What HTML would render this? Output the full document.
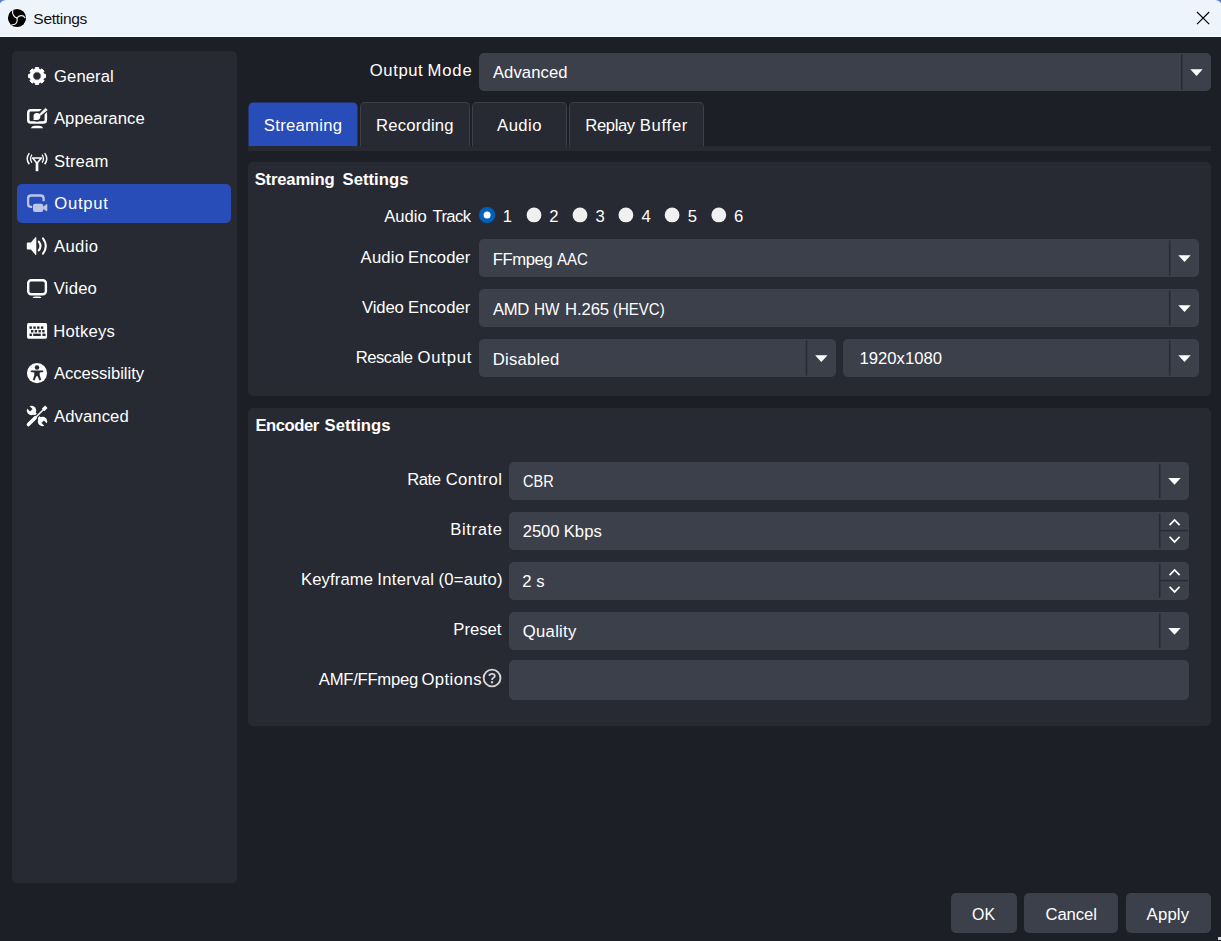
<!DOCTYPE html>
<html><head><meta charset="utf-8"><title>Settings</title>
<style>
html,body{margin:0;padding:0;}
body{width:1221px;height:941px;overflow:hidden;background:#1d1f26;position:relative;font-family:"Liberation Sans",sans-serif;}
.b{position:absolute;}
.t{position:absolute;white-space:nowrap;line-height:20px;color:#fff;font-family:"Liberation Sans",sans-serif;}
.ov{position:absolute;left:0;top:0;}
</style></head><body>
<div class="b" style="left:0px;top:0px;width:1221px;height:36px;background:#eef4fb;"></div>
<div class="b" style="left:0px;top:36px;width:1221px;height:1px;background:#fdfeff;"></div>
<div class="b" style="left:12px;top:51px;width:225.4px;height:832px;background:#272a33;border-radius:5px;"></div>
<div class="b" style="left:17px;top:184px;width:214px;height:38.5px;background:#284cb8;border-radius:5px;"></div>
<div class="b" style="left:479px;top:53px;width:732px;height:38px;background:#3c404b;border-radius:5px;"></div>
<div class="b" style="left:360px;top:102px;width:110px;height:44px;background:#272a33;border-radius:5px 5px 0 0;box-sizing:border-box;border:1px solid #3c404b;border-bottom:none;"></div>
<div class="b" style="left:472px;top:102px;width:95px;height:44px;background:#272a33;border-radius:5px 5px 0 0;box-sizing:border-box;border:1px solid #3c404b;border-bottom:none;"></div>
<div class="b" style="left:569px;top:102px;width:135px;height:44px;background:#272a33;border-radius:5px 5px 0 0;box-sizing:border-box;border:1px solid #3c404b;border-bottom:none;"></div>
<div class="b" style="left:248px;top:146px;width:963px;height:5px;background:#272a33;"></div>
<div class="b" style="left:248px;top:162px;width:963px;height:234px;background:#272a33;border-radius:5px;"></div>
<div class="b" style="left:248px;top:408px;width:963px;height:318px;background:#272a33;border-radius:5px;"></div>
<div class="b" style="left:479px;top:239px;width:720px;height:38px;background:#3c404b;border-radius:5px;"></div>
<div class="b" style="left:479px;top:289px;width:720px;height:38px;background:#3c404b;border-radius:5px;"></div>
<div class="b" style="left:479px;top:339px;width:357px;height:38px;background:#3c404b;border-radius:5px;"></div>
<div class="b" style="left:843px;top:339px;width:356px;height:38px;background:#3c404b;border-radius:5px;"></div>
<div class="b" style="left:509px;top:462px;width:680px;height:37.5px;background:#3c404b;border-radius:5px;"></div>
<div class="b" style="left:509px;top:512px;width:680px;height:37.5px;background:#3c404b;border-radius:5px;"></div>
<div class="b" style="left:509px;top:562px;width:680px;height:37.5px;background:#3c404b;border-radius:5px;"></div>
<div class="b" style="left:509px;top:612px;width:680px;height:37.5px;background:#3c404b;border-radius:5px;"></div>
<div class="b" style="left:509px;top:660px;width:680px;height:40px;background:#3c404b;border-radius:5px;"></div>
<div class="b" style="left:951px;top:893px;width:66px;height:40px;background:#3c404b;border-radius:5px;"></div>
<div class="b" style="left:1024px;top:893px;width:94px;height:40px;background:#3c404b;border-radius:5px;"></div>
<div class="b" style="left:1126px;top:893px;width:84.5px;height:40px;background:#3c404b;border-radius:5px;"></div>
<div class="b" style="left:1218px;top:937px;width:3px;height:3px;background:#d4d4d4;"></div>
<svg class="ov" width="1221" height="941" viewBox="0 0 1221 941">
<path d="M0,0 L5.6,0 Q1.3,0.6 0,3.6Z" fill="#5a80c8"/>
<path d="M1221,0 L1215.6,0 Q1219.7,0.6 1221,3.4Z" fill="#5a80c8"/>
<path d="M248.5,146 L248.5,107.5 Q248.5,102.5 253.5,102.5 L352.5,102.5 Q357.5,102.5 357.5,107.5 L357.5,146Z" fill="#284cb8"/>
<circle cx="17" cy="18" r="9.7" fill="#fff"/>
<circle cx="17" cy="18" r="9.1" fill="#000"/>
<g fill="none" stroke="#ececec" stroke-width="1.2" stroke-linecap="round"><path d="M16.9,18 C14.5,17.2 11.6,14.2 12.8,10.2"/><path d="M16.9,18 C18.8,15.6 22.9,14.2 25.0,17.8"/><path d="M16.9,18 C18.3,21.2 16.2,25.2 12.0,24.7"/></g>
<path d="M1197,12 L1209.2,24.2 M1209.2,12 L1197,24.2" stroke="#000" stroke-width="1.15" fill="none"/>
<path d="M35.03,69.28 L35.41,67.50 L38.59,67.50 L38.97,69.28 L40.36,69.86 L41.89,68.86 L44.14,71.11 L43.14,72.64 L43.72,74.03 L45.50,74.41 L45.50,77.59 L43.72,77.97 L43.14,79.36 L44.14,80.89 L41.89,83.14 L40.36,82.14 L38.97,82.72 L38.59,84.50 L35.41,84.50 L35.03,82.72 L33.64,82.14 L32.11,83.14 L29.86,80.89 L30.86,79.36 L30.28,77.97 L28.50,77.59 L28.50,74.41 L30.28,74.03 L30.86,72.64 L29.86,71.11 L32.11,68.86 L33.64,69.86Z M32.80,76.00 a4.2,4.2 0 1,0 8.4,0 a4.2,4.2 0 1,0 -8.4,0Z" fill="#fff" fill-rule="evenodd" stroke="#fff" stroke-width="0.9" stroke-linejoin="round"/>
<g><rect x="28.25" y="110.3" width="17.6" height="12.3" rx="2.6" fill="none" stroke="#fff" stroke-width="2.5"/><path d="M47.8,107.4 L38.5,116" stroke="#272a33" stroke-width="5.6" fill="none" stroke-linecap="butt"/><circle cx="37.0" cy="116.7" r="5.0" fill="#272a33"/><path d="M45.5,108.2 L47.4,110.0 L40.6,115.4 L39.4,114.2Z" fill="#fff" stroke="#fff" stroke-width="0.5" stroke-linejoin="round"/><circle cx="36.9" cy="116.4" r="3.4" fill="#fff"/><path d="M33.4,120.0 C33.7,118.4 33.8,117.2 34.3,115.4 L38.6,119.2 C36.8,120.1 35.2,120.1 33.4,120.0Z" fill="#fff"/><path d="M30.8,128.2 Q31.5,125.7 34.5,125.7 L39.5,125.7 Q42.5,125.7 43.2,128.2Z" fill="#fff"/></g>
<g fill="none" stroke="#fff"><path d="M32.6,158.0 L41.4,158.0 L37,163.3Z" fill="none" stroke-width="1.6" stroke-linejoin="round"/><path d="M37,162.5 L37,171.2" stroke-width="2.7"/><path d="M31.9,154.7 Q29.2,158.7 31.9,162.7" stroke-width="1.3"/><path d="M29.3,153.1 Q25.2,158.7 29.3,164.3" stroke-width="1.5"/><path d="M42.1,154.7 Q44.8,158.7 42.1,162.7" stroke-width="1.3"/><path d="M44.7,153.1 Q48.8,158.7 44.7,164.3" stroke-width="1.5"/></g>
<g fill="none" stroke="#bcc6ea"><path d="M32.2,206.9 L31,206.9 Q28.1,206.9 28.1,204 L28.1,198.4 Q28.1,195.5 31,195.5 L40.7,195.5 Q43.6,195.5 43.6,198.4 L43.6,201.2" stroke-width="2.3"/><rect x="33" y="203.7" width="10.2" height="8.3" rx="2" fill="#bcc6ea" stroke="none"/><path d="M43.3,206.7 L47.0,204.3 L47.0,211.1 L43.3,208.9Z" fill="#bcc6ea" stroke="#bcc6ea" stroke-width="0.6" stroke-linejoin="round"/></g>
<g><path d="M26.8,243.6 Q26.8,242.5 27.9,242.5 L30.9,242.5 L35.4,237.3 Q36.3,236.6 36.3,237.8 L36.3,254.2 Q36.3,255.4 35.4,254.7 L30.9,249.6 L27.9,249.6 Q26.8,249.6 26.8,248.5Z" fill="#fff"/><path d="M38.8,241.6 Q42.2,246 38.8,250.4" fill="none" stroke="#fff" stroke-width="2.1" stroke-linecap="round"/><path d="M43.0,238.3 Q48.6,246 43.0,253.7" fill="none" stroke="#fff" stroke-width="2.1" stroke-linecap="round"/></g>
<g><rect x="28.2" y="280.2" width="17.7" height="14.0" rx="3" fill="none" stroke="#fff" stroke-width="2.4"/><path d="M32.8,297.6 Q33.4,296.4 35,296.4 L39,296.4 Q40.6,296.4 41.2,297.6 L41.2,298.1 L32.8,298.1Z" fill="#fff"/></g>
<rect x="27" y="323.1" width="20.1" height="15.6" rx="1.6" fill="#fff"/><g fill="#272a33"><rect x="29.5" y="326.4" width="2.4" height="2.4"/><rect x="33.3" y="326.4" width="2.4" height="2.4"/><rect x="37.1" y="326.4" width="2.4" height="2.4"/><rect x="40.9" y="326.4" width="2.4" height="2.4"/><rect x="31.0" y="330.0" width="2.4" height="2.4"/><rect x="34.699999999999996" y="330.0" width="2.4" height="2.4"/><rect x="38.5" y="330.0" width="2.4" height="2.4"/><rect x="42.199999999999996" y="330.0" width="2.4" height="2.4"/><rect x="29.5" y="333.6" width="2.4" height="2.4"/><rect x="33.2" y="333.6" width="7.6" height="2.4"/><rect x="42.4" y="333.6" width="3.1" height="2.4"/></g>
<circle cx="37" cy="373.1" r="10.1" fill="#fff"/><g fill="#272a33"><circle cx="37" cy="367.6" r="2.25"/><path d="M30.8,370.5 L43.2,370.5 L43.2,372.0 L39.7,372.5 L39.7,375.2 L41.2,379.8 L39.5,380.4 L37.7,376.2 L36.3,376.2 L34.5,380.4 L32.8,379.8 L34.3,375.2 L34.3,372.5 L30.8,372.0Z"/></g>
<g><path d="M31.6,410.6 L42.4,421.4" stroke="#fff" stroke-width="3.3" fill="none"/><circle cx="31.5" cy="410.5" r="4.7" fill="#fff"/><circle cx="42.5" cy="421.5" r="4.7" fill="#fff"/><path d="M31.3,410.3 L25.5,404.5" stroke="#272a33" stroke-width="3.5" fill="none"/><path d="M42.7,421.7 L48.5,427.5" stroke="#272a33" stroke-width="3.5" fill="none"/><path d="M28.0,425.0 L35.4,417.6" stroke="#272a33" stroke-width="5.4" stroke-linecap="round" fill="none"/><path d="M35,418 L46.6,406.4" stroke="#272a33" stroke-width="3.6" fill="none"/><path d="M28.4,424.6 L35.3,417.7" stroke="#fff" stroke-width="3.5" stroke-linecap="round" fill="none"/><path d="M35,418 L43.8,409.2" stroke="#fff" stroke-width="1.5" fill="none"/><path d="M43.0,410.0 L46.3,406.7" stroke="#fff" stroke-width="3.5" fill="none"/></g>
<circle cx="487.1" cy="215" r="8.1" fill="#0060bf"/><circle cx="487.1" cy="215" r="3.5" fill="#fff"/>
<circle cx="534.0" cy="214.9" r="7.4" fill="#f0f0f0"/>
<circle cx="580.0" cy="214.9" r="7.4" fill="#f0f0f0"/>
<circle cx="625.9" cy="214.9" r="7.4" fill="#f0f0f0"/>
<circle cx="672.1" cy="214.9" r="7.4" fill="#f0f0f0"/>
<circle cx="718.8" cy="214.9" r="7.4" fill="#f0f0f0"/>
<rect x="1180.9" y="54.5" width="1.6" height="35" fill="#282b35"/><path d="M1190.3,69.3 L1202.7,69.3 L1196.5,76.1Z" fill="#fff"/>
<rect x="1168.9" y="240.5" width="1.6" height="35" fill="#282b35"/><path d="M1178.3,255.3 L1190.7,255.3 L1184.5,262.1Z" fill="#fff"/>
<rect x="1168.9" y="290.5" width="1.6" height="35" fill="#282b35"/><path d="M1178.3,305.3 L1190.7,305.3 L1184.5,312.1Z" fill="#fff"/>
<rect x="805.6999999999999" y="340.5" width="1.6" height="35" fill="#282b35"/><path d="M815.0999999999999,355.3 L827.5,355.3 L821.3,362.1Z" fill="#fff"/>
<rect x="1168.9" y="340.5" width="1.6" height="35" fill="#282b35"/><path d="M1178.3,355.3 L1190.7,355.3 L1184.5,362.1Z" fill="#fff"/>
<rect x="1158.9" y="463.5" width="1.6" height="34.5" fill="#282b35"/><path d="M1168.3,478.05 L1180.7,478.05 L1174.5,484.85Z" fill="#fff"/>
<rect x="1158.9" y="513.5" width="1.6" height="34.5" fill="#282b35"/><rect x="1160.2" y="529.85" width="27.6" height="1.5" fill="#282b35"/><path d="M1169.6,525.15 L1174.6,519.95 L1179.6,525.15" fill="none" stroke="#fff" stroke-width="1.7"/><path d="M1169.6,536.75 L1174.6,541.95 L1179.6,536.75" fill="none" stroke="#fff" stroke-width="1.7"/>
<rect x="1158.9" y="563.5" width="1.6" height="34.5" fill="#282b35"/><rect x="1160.2" y="579.85" width="27.6" height="1.5" fill="#282b35"/><path d="M1169.6,575.15 L1174.6,569.95 L1179.6,575.15" fill="none" stroke="#fff" stroke-width="1.7"/><path d="M1169.6,586.75 L1174.6,591.95 L1179.6,586.75" fill="none" stroke="#fff" stroke-width="1.7"/>
<rect x="1158.9" y="613.5" width="1.6" height="34.5" fill="#282b35"/><path d="M1168.3,628.05 L1180.7,628.05 L1174.5,634.8499999999999Z" fill="#fff"/>
<circle cx="492.05" cy="678" r="8.4" fill="none" stroke="#d6d6d6" stroke-width="1.9"/><path d="M489.3,675.9 Q489.4,673.9 492.0,673.9 Q494.8,673.9 494.8,676.0 Q494.8,677.2 493.2,678.0 Q492.0,678.7 492.0,680.0" fill="none" stroke="#d6d6d6" stroke-width="1.8"/><rect x="490.9" y="681.2" width="2.2" height="2.1" fill="#d6d6d6"/>
</svg>
<span class="t" id="title" style="left:33.36px;top:9.30px;font-size:15.5px;letter-spacing:-0.294px;color:#111;">Settings</span>
<span class="t" id="s0" style="left:54.10px;top:66.50px;font-size:16.67px;letter-spacing:0.065px;">General</span>
<span class="t" id="s1" style="left:53.90px;top:109.00px;font-size:16.67px;letter-spacing:0.116px;">Appearance</span>
<span class="t" id="s2" style="left:53.91px;top:151.50px;font-size:16.67px;letter-spacing:0.138px;">Stream</span>
<span class="t" id="s3" style="left:54.18px;top:194.00px;font-size:16.67px;letter-spacing:0.751px;">Output</span>
<span class="t" id="s4" style="left:53.97px;top:236.50px;font-size:16.67px;letter-spacing:0.379px;">Audio</span>
<span class="t" id="s5" style="left:53.72px;top:279.00px;font-size:16.67px;letter-spacing:0.215px;">Video</span>
<span class="t" id="s6" style="left:53.35px;top:321.50px;font-size:16.67px;letter-spacing:0.211px;">Hotkeys</span>
<span class="t" id="s7" style="left:54.04px;top:364.00px;font-size:16.67px;letter-spacing:-0.059px;">Accessibility</span>
<span class="t" id="s8" style="left:54.04px;top:406.50px;font-size:16.67px;letter-spacing:0.077px;">Advanced</span>
<span class="t" id="om_0" style="left:369.81px;top:61.00px;font-size:16.67px;letter-spacing:0.583px;">Output</span>
<span class="t" id="om_1" style="left:427.45px;top:61.00px;font-size:16.67px;letter-spacing:0.897px;">Mode</span>
<span class="t" id="omv" style="left:492.90px;top:62.50px;font-size:16.67px;letter-spacing:0.072px;">Advanced</span>
<span class="t" id="tab0" style="left:263.86px;top:115.50px;font-size:16.67px;letter-spacing:0.274px;">Streaming</span>
<span class="t" id="tab1" style="left:376.12px;top:115.50px;font-size:16.67px;letter-spacing:0.183px;">Recording</span>
<span class="t" id="tab2" style="left:497.12px;top:115.50px;font-size:16.67px;letter-spacing:0.438px;">Audio</span>
<span class="t" id="tab3_0" style="left:585.35px;top:115.50px;font-size:16.67px;letter-spacing:-0.417px;">Replay</span>
<span class="t" id="tab3_1" style="left:639.78px;top:115.50px;font-size:16.67px;letter-spacing:0.700px;">Buffer</span>
<span class="t" id="g1_0" style="left:254.65px;top:169.50px;font-size:16.67px;letter-spacing:-0.182px;font-weight:700;">Streaming</span>
<span class="t" id="g1_1" style="left:342.55px;top:169.50px;font-size:16.67px;letter-spacing:0.024px;font-weight:700;">Settings</span>
<span class="t" id="at_0" style="left:384.19px;top:206.50px;font-size:16.67px;letter-spacing:0.009px;">Audio</span>
<span class="t" id="at_1" style="left:432.53px;top:206.50px;font-size:16.67px;letter-spacing:-0.624px;">Track</span>
<span class="t" id="r1" style="left:502.78px;top:206.50px;font-size:16.67px;">1</span>
<span class="t" id="r2" style="left:549.30px;top:206.50px;font-size:16.67px;">2</span>
<span class="t" id="r3" style="left:595.41px;top:206.50px;font-size:16.67px;">3</span>
<span class="t" id="r4" style="left:641.38px;top:206.50px;font-size:16.67px;">4</span>
<span class="t" id="r5" style="left:687.82px;top:206.50px;font-size:16.67px;">5</span>
<span class="t" id="r6" style="left:734.03px;top:206.50px;font-size:16.67px;">6</span>
<span class="t" id="ae_0" style="left:360.60px;top:247.50px;font-size:16.67px;letter-spacing:0.184px;">Audio</span>
<span class="t" id="ae_1" style="left:408.00px;top:247.50px;font-size:16.67px;letter-spacing:0.056px;">Encoder</span>
<span class="t" id="ve_0" style="left:361.94px;top:297.50px;font-size:16.67px;letter-spacing:-0.088px;">Video</span>
<span class="t" id="ve_1" style="left:408.00px;top:297.50px;font-size:16.67px;letter-spacing:0.056px;">Encoder</span>
<span class="t" id="ro_0" style="left:355.67px;top:347.50px;font-size:16.67px;letter-spacing:-0.471px;">Rescale</span>
<span class="t" id="ro_1" style="left:417.60px;top:347.50px;font-size:16.67px;letter-spacing:0.769px;">Output</span>
<span class="t" id="aev_0" style="left:492.64px;top:249.50px;font-size:16.67px;letter-spacing:-0.389px;">FFmpeg</span>
<span class="t" id="aev_1" style="left:557.00px;top:249.50px;font-size:16.67px;transform:scaleX(0.9057);transform-origin:0 0;">AAC</span>
<span class="t" id="vev_0" style="left:492.90px;top:299.50px;font-size:16.67px;letter-spacing:-0.270px;">AMD</span>
<span class="t" id="vev_1" style="left:533.58px;top:299.50px;font-size:16.67px;transform:scaleX(0.9221);transform-origin:0 0;">HW</span>
<span class="t" id="vev_2" style="left:565.12px;top:299.50px;font-size:16.67px;letter-spacing:-0.114px;">H.265</span>
<span class="t" id="vev_3" style="left:612.65px;top:299.50px;font-size:16.67px;transform:scaleX(0.9008);transform-origin:0 0;">(HEVC)</span>
<span class="t" id="rov" style="left:492.79px;top:349.50px;font-size:16.67px;letter-spacing:0.223px;">Disabled</span>
<span class="t" id="res" style="left:859.54px;top:348.50px;font-size:16.67px;letter-spacing:0.005px;">1920x1080</span>
<span class="t" id="g2_0" style="left:255.38px;top:415.50px;font-size:16.67px;letter-spacing:-0.449px;font-weight:700;">Encoder</span>
<span class="t" id="g2_1" style="left:324.49px;top:415.50px;font-size:16.67px;letter-spacing:0.045px;font-weight:700;">Settings</span>
<span class="t" id="rc_0" style="left:407.21px;top:469.50px;font-size:16.67px;letter-spacing:-0.465px;">Rate</span>
<span class="t" id="rc_1" style="left:445.66px;top:469.50px;font-size:16.67px;letter-spacing:0.413px;">Control</span>
<span class="t" id="br" style="left:450.35px;top:519.50px;font-size:16.67px;letter-spacing:0.590px;">Bitrate</span>
<span class="t" id="ki_0" style="left:301.00px;top:569.50px;font-size:16.67px;letter-spacing:0.122px;">Keyframe</span>
<span class="t" id="ki_1" style="left:377.26px;top:569.50px;font-size:16.67px;letter-spacing:0.310px;">Interval</span>
<span class="t" id="ki_2" style="left:438.53px;top:569.50px;font-size:16.67px;letter-spacing:0.207px;">(0=auto)</span>
<span class="t" id="pr" style="left:453.27px;top:619.50px;font-size:16.67px;letter-spacing:0.005px;">Preset</span>
<span class="t" id="amf_0" style="left:318.87px;top:669.50px;font-size:16.67px;letter-spacing:-0.275px;">AMF/FFmpeg</span>
<span class="t" id="amf_1" style="left:421.39px;top:669.50px;font-size:16.67px;letter-spacing:0.446px;">Options</span>
<span class="t" id="rcv" style="left:522.59px;top:471.50px;font-size:16.67px;transform:scaleX(0.8740);transform-origin:0 0;">CBR</span>
<span class="t" id="brv_0" style="left:522.71px;top:521.50px;font-size:16.67px;letter-spacing:-0.061px;">2500</span>
<span class="t" id="brv_1" style="left:563.69px;top:521.50px;font-size:16.67px;letter-spacing:0.063px;">Kbps</span>
<span class="t" id="kiv_0" style="left:522.20px;top:571.50px;font-size:16.67px;">2</span>
<span class="t" id="kiv_1" style="left:536.23px;top:571.50px;font-size:16.67px;">s</span>
<span class="t" id="prv" style="left:522.81px;top:621.50px;font-size:16.67px;letter-spacing:0.285px;">Quality</span>
<span class="t" id="ok" style="left:972.23px;top:904.50px;font-size:16.67px;transform:scaleX(0.9561);transform-origin:0 0;">OK</span>
<span class="t" id="cancel" style="left:1045.49px;top:904.50px;font-size:16.67px;letter-spacing:-0.079px;">Cancel</span>
<span class="t" id="apply" style="left:1146.60px;top:904.50px;font-size:16.67px;letter-spacing:0.209px;">Apply</span>
</body></html>
